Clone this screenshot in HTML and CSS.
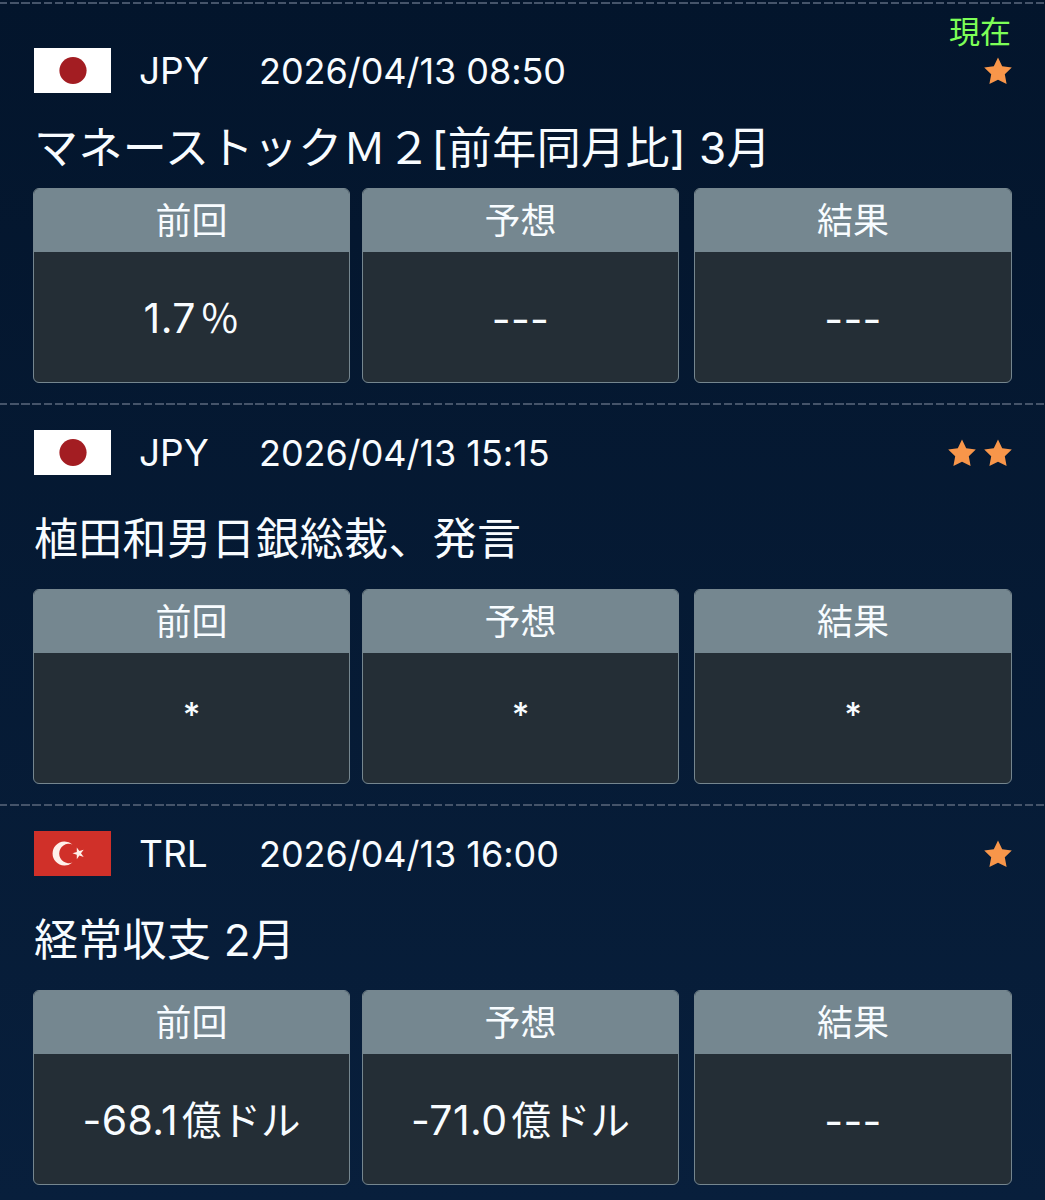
FILE: index.html
```
<!DOCTYPE html>
<html lang="ja">

<head>
    <meta charset="UTF-8">
    <title>経済指標</title>
    <link rel="stylesheet" href="styles.css">
</head>

<body>
    <!-- 共通アイコン -->
    <svg class="d-none">
        <symbol id="star" viewBox="0 0 28 28">
            <path d="M14 0.5 L18.2 9.3 L27.8 10.6 L20.8 17.3 L22.6 27 L14 22.8 L5.4 27 L7.2 17.3 L0.2 10.6 L9.8 9.3 Z" />
        </symbol>
        <symbol id="flag-jp" viewBox="0 0 77 45">
            <rect width="77" height="45" fill="#fff" />
            <circle cx="39" cy="22.5" r="13.6" fill="#a31d22" />
        </symbol>
        <symbol id="flag-tr" viewBox="0 0 77 45">
            <rect width="77" height="45" fill="#d03029" />
            <path d="M38.5 13.5 A12 12 0 1 0 38.5 31.5 A9.7 9.7 0 1 1 38.5 13.5 Z" fill="#fff0ea" />
            <path d="M38.5 22.3 L42.8 20.9 L42.8 16.4 L45.4 20.1 L49.7 18.7 L47 22.3 L49.7 25.9 L45.4 24.5 L42.8 28.2 L42.8 23.7 Z" fill="#fff0ea" />
        </symbol>
    </svg>

    <div class="list">
        <div class="event">
            <div class="now">現在</div>
            <div class="head">
                <svg class="flag"><use href="#flag-jp" /></svg>
                <span class="currency">JPY</span>
                <span class="date">2026/04/13 08:50</span>
                <div class="stars">
                    <svg class="star"><use href="#star" /></svg>
                </div>
            </div>
            <h2 class="title title-now">マネーストックＭ２[前年同月比] 3月</h2>
            <div class="values">
                <div class="box">
                    <div class="label">前回</div>
                    <div class="value"><span class="num">1.7</span>％</div>
                </div>
                <div class="box">
                    <div class="label">予想</div>
                    <div class="value dash">---</div>
                </div>
                <div class="box">
                    <div class="label">結果</div>
                    <div class="value dash">---</div>
                </div>
            </div>
        </div>

        <div class="event">
            <div class="head">
                <svg class="flag"><use href="#flag-jp" /></svg>
                <span class="currency">JPY</span>
                <span class="date">2026/04/13 15:15</span>
                <div class="stars">
                    <svg class="star"><use href="#star" /></svg>
                    <svg class="star"><use href="#star" /></svg>
                </div>
            </div>
            <h2 class="title">植田和男日銀総裁、発言</h2>
            <div class="values">
                <div class="box">
                    <div class="label">前回</div>
                    <div class="value mark">*</div>
                </div>
                <div class="box">
                    <div class="label">予想</div>
                    <div class="value mark">*</div>
                </div>
                <div class="box">
                    <div class="label">結果</div>
                    <div class="value mark">*</div>
                </div>
            </div>
        </div>

        <div class="event">
            <div class="head">
                <svg class="flag"><use href="#flag-tr" /></svg>
                <span class="currency">TRL</span>
                <span class="date">2026/04/13 16:00</span>
                <div class="stars">
                    <svg class="star"><use href="#star" /></svg>
                </div>
            </div>
            <h2 class="title">経常収支 2月</h2>
            <div class="values">
                <div class="box">
                    <div class="label">前回</div>
                    <div class="value"><span class="num">-68.1</span>億ドル</div>
                </div>
                <div class="box">
                    <div class="label">予想</div>
                    <div class="value"><span class="num">-71.0</span>億ドル</div>
                </div>
                <div class="box">
                    <div class="label">結果</div>
                    <div class="value dash">---</div>
                </div>
            </div>
        </div>
    </div>
</body>

</html>
```
FILE: styles.css
```
* {
    box-sizing: border-box;
}

body {
    margin: 0;
    height: 1200px;
    overflow: hidden;
    background: linear-gradient(#03152c, #081f3c);
    color: #f8fcff;
    font-family: Inter, "Noto Sans CJK JP", sans-serif;
    font-weight: 390;
}

.d-none {
    display: none;
}

.list {
    padding-top: 2px;
}

.event {
    position: relative;
    height: 401px;
    padding: 27px 33px 0 33px;
    display: flex;
    flex-direction: column;
    background: repeating-linear-gradient(90deg, #45546a 0 8.5px, transparent 8.5px 11.15px) -1px 0 / 1060px 2px no-repeat;
}

.event:first-child {
    padding-top: 46px;
}

.now {
    position: absolute;
    top: 10px;
    right: 34px;
    font-size: 31px;
    line-height: 40px;
    color: #7dff57;
}

.head {
    display: flex;
    align-items: center;
    height: 45px;
    padding-left: 1px;
}

.flag {
    width: 77px;
    height: 45px;
}

.currency {
    width: 120px;
    margin-left: 28px;
    font-size: 37px;
}

.date {
    font-size: 36px;
    letter-spacing: -0.05px;
}

.stars {
    display: flex;
    gap: 8px;
    margin-left: auto;
}

.star {
    width: 28px;
    height: 28px;
    fill: #f8964a;
}

.title {
    height: 114px;
    margin: 0;
    padding-left: 1px;
    font-size: 44px;
    font-weight: 390;
    letter-spacing: 0.3px;
    line-height: 128px;
    white-space: nowrap;
}

.title-now {
    height: 95px;
    line-height: 110px;
    letter-spacing: 0.4px;
}

.values {
    display: grid;
    grid-template-columns: 329px 332px 318px;
}

.box {
    width: 317px;
    height: 195px;
    border: 1px solid #75868f;
    border-radius: 6px;
    overflow: hidden;
    background: #242e36;
    text-align: center;
}

.box:last-child {
    width: 318px;
}

.label {
    height: 63px;
    background: #758790;
    font-size: 36px;
    line-height: 65px;
}

.value {
    height: 130px;
    font-size: 39.5px;
    line-height: 132px;
}

.num {
    margin-right: 4px;
    font-size: 41px;
    letter-spacing: 0.4px;
}

.dash {
    font-size: 41px;
    letter-spacing: 0.3px;
    line-height: 134px;
}

.mark {
    font-size: 34px;
    font-weight: 550;
    line-height: 124px;
}
```
